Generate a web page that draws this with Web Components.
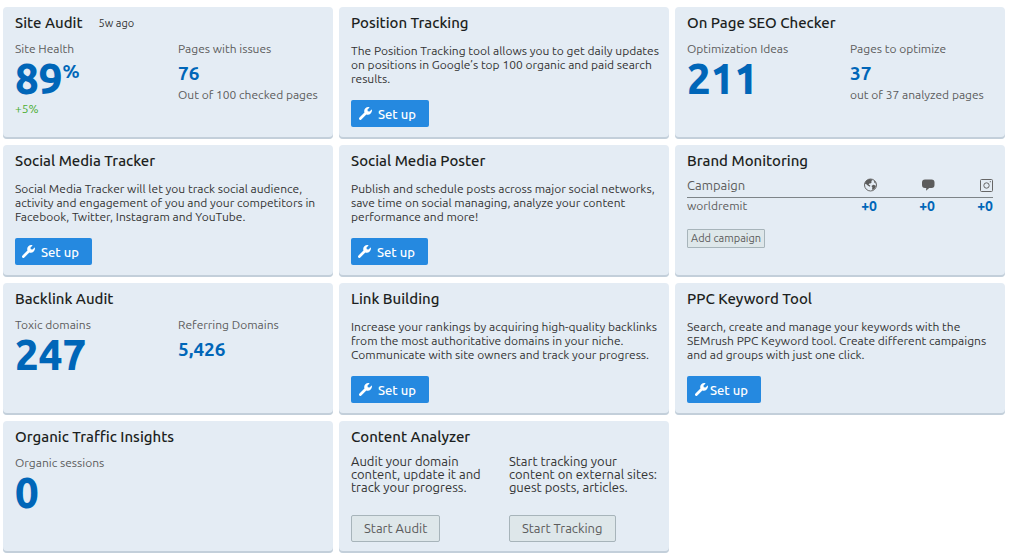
<!DOCTYPE html>
<html lang="en">
<head>
<meta charset="utf-8">
<meta name="viewport" content="width=device-width, initial-scale=1">
<title>SEO tools dashboard</title>
<style>
  body { margin: 0; background: #fff; color: #333; font-family: Ubuntu, "Noto Sans", "Open Sans", sans-serif; }
</style>
</head>
<body>
<tool-dashboard></tool-dashboard>

<script>
const define = (name, html) => {
  const template = document.createElement('template');
  template.innerHTML = html;
  customElements.define(name, class extends HTMLElement {
    constructor() {
      super();
      this.attachShadow({ mode: 'open' }).append(template.content.cloneNode(true));
    }
  });
};

define('tool-card', `
  <style>
    :host { display: block; box-sizing: border-box; min-height: 132px; padding: 6px 12px 8px;
      background: #e4ecf4; border-radius: 4px; box-shadow: inset 0 -2px 0 #c3cfda; }
    header { display: flex; align-items: center; gap: 16px; font-size: 11px; line-height: 20px; }
    h2 { margin: 0; font-size: 15px; font-weight: 500; line-height: 20px; color: #1c1f21; }
  </style>
  <header><h2><slot name="title"></slot></h2><slot name="note"></slot></header>
  <slot></slot>`);

define('metric-pair', `
  <style>
    :host { display: grid; grid-template-columns: 1fr 1fr; gap: 20px; margin-top: 8px; }
  </style>
  <slot></slot>`);

define('metric-large', `
  <style>
    :host { display: block; font-size: 12px; line-height: 16px; color: #5c5c5c; }
    .value { display: flex; align-items: flex-start; font-size: 42px; font-weight: 800; line-height: 44px; color: #0066b8; }
    ::slotted([slot="unit"]) { font-size: 19px; font-weight: 700; line-height: 28px; }
    ::slotted([slot="change"]) { color: #4bae32; }
  </style>
  <div><slot name="label"></slot></div>
  <div class="value"><slot></slot><slot name="unit"></slot></div>
  <div><slot name="change"></slot></div>`);

define('metric-small', `
  <style>
    :host { display: block; font-size: 12px; line-height: 16px; color: #5c5c5c; white-space: nowrap; }
    .value { margin: 4px 0 2px; font-size: 19px; font-weight: 700; line-height: 24px; color: #0066b8; }
  </style>
  <div><slot name="label"></slot></div>
  <div class="value"><slot></slot></div>
  <div><slot name="detail"></slot></div>`);

define('setup-prompt', `
  <style>
    :host { display: block; margin-top: 11px; font-size: 12px; line-height: 14px; white-space: nowrap; }
    p { margin: 0 0 14px; }
    button { display: flex; align-items: center; gap: 6px; height: 27px; padding: 0 13px 0 8px; border: 0;
      border-radius: 2px; background: #2589e0; color: #fff; font: 500 13px/18px Ubuntu, "Noto Sans", "Open Sans", sans-serif; }
    :host([snug]) button { padding: 0 13px 0 7px; }
    :host([tight]) button { gap: 2px; }
    svg { width: 13px; height: 13px; }
  </style>
  <p><slot></slot></p>
  <button type="button">
    <svg viewBox="0 0 512 512" aria-hidden="true"><path fill="#fff" d="M508 109c-2-9-14-12-20-5l-75 75-68-11-11-68 75-75c6-6 4-17-5-20C350-8 294 5 251 48c-46 46-58 114-36 172L19 416c-27 27-25 57-7 77 20 22 51 24 80-5l198-192c58 20 124 9 170-37 42-42 59-97 48-150z"/></svg>
    <span>Set up</span>
  </button>`);

define('outline-button', `
  <style>
    :host { display: block; }
    button { display: block; height: 27px; padding: 0 12px; border: 1px solid #a7b4ba; border-radius: 2px;
      background: #dee7ea; color: #5c5c5c; font: 400 13px/17px Ubuntu, "Noto Sans", "Open Sans", sans-serif; white-space: nowrap; }
    :host([small]) button { height: 19px; padding: 0 3px; font-size: 11px; line-height: 15px; border-radius: 1px; }
  </style>
  <button type="button"><slot></slot></button>`);

define('campaign-table', `
  <style>
    :host { display: block; margin: 6px 0 15px; color: #5c5c5c; }
    table { width: 100%; border-collapse: collapse; table-layout: fixed; font-size: 13px; line-height: 16px; }
    th, td { padding: 0; text-align: right; vertical-align: top; }
    th:first-child, td:first-child { text-align: left; font-weight: 400; }
    th { height: 20px; border-bottom: 1px solid #7d8488; }
    th:not(:first-child) { width: 58px; }
    td { height: 16px; font-size: 12px; }
    td:not(:first-child) { font-size: 14px; font-weight: 700; color: #0066b8; }
    svg { display: block; width: 14px; height: 14px; margin: 1px 0 0 auto; }
  </style>
  <table>
    <thead><tr>
      <th scope="col">Campaign</th>
      <th scope="col" aria-label="Web"><svg viewBox="0 0 14 14"><circle cx="7.5" cy="7" r="6" fill="none" stroke="#666"/><path fill="#5c5c5c" d="M1.7 5.5 3.3 2.6 6.5 1.1l2.6.3.3 1.2-1.4.5.9 1L7.5 5.6l-1.2-.2-.7 1.2 1.7.9-.3 1.2-2-.9L3.7 6.4zM8.5 8l1.8-1.2 2.2.6.3 1.4-1.5 2.3-1.7 1-.6-1.2.4-1.2zM10.7 2.4l1.6 1.4.6 1.6-1.5-.6z"/></svg></th>
      <th scope="col" aria-label="Mentions"><svg viewBox="0 0 14 14"><path fill="#5c5c5c" d="M4 1.5h6.5a3 3 0 0 1 3 3V7a3 3 0 0 1-3 3H8.2L5 12.7 5.3 10H4a3 3 0 0 1-3-3V4.5a3 3 0 0 1 3-3z"/></svg></th>
      <th scope="col" aria-label="Instagram"><svg viewBox="0 0 14 14" fill="none" stroke="#666"><rect x="1.5" y="1.5" width="12" height="12" rx="1"/><circle cx="7.5" cy="7.5" r="2.7"/><circle cx="11.3" cy="3.7" r=".6" fill="#666" stroke="none"/></svg></th>
    </tr></thead>
    <tbody><tr><td>worldremit</td><td>+0</td><td>+0</td><td>+0</td></tr></tbody>
  </table>`);

define('action-pair', `
  <style>
    :host { display: grid; grid-template-columns: 1fr 1fr; gap: 10px; margin-top: 8px; font-size: 13px; line-height: 13px; }
  </style>
  <slot></slot>`);

define('action-block', `
  <style>
    :host { display: block; white-space: nowrap; }
    p { margin: 0 0 21px; }
  </style>
  <p><slot></slot></p>
  <outline-button><slot name="action"></slot></outline-button>`);

define('tool-dashboard', `
  <style>
    :host { display: grid; grid-template-columns: repeat(3, minmax(0, 1fr)); gap: 6px; padding: 7px 5px 7px 3px; }
  </style>
  <tool-card>
    <span slot="title">Site Audit</span><span slot="note">5w ago</span>
    <metric-pair>
      <metric-large><span slot="label">Site Health</span>89<span slot="unit">%</span><span slot="change">+5%</span></metric-large>
      <metric-small><span slot="label">Pages with issues</span>76<span slot="detail">Out of 100 checked pages</span></metric-small>
    </metric-pair>
  </tool-card>
  <tool-card>
    <span slot="title">Position Tracking</span>
    <setup-prompt>The Position Tracking tool allows you to get daily updates<br>on positions in Google’s top 100 organic and paid search<br>results.</setup-prompt>
  </tool-card>
  <tool-card>
    <span slot="title">On Page SEO Checker</span>
    <metric-pair>
      <metric-large><span slot="label">Optimization Ideas</span>211</metric-large>
      <metric-small><span slot="label">Pages to optimize</span>37<span slot="detail">out of 37 analyzed pages</span></metric-small>
    </metric-pair>
  </tool-card>
  <tool-card>
    <span slot="title">Social Media Tracker</span>
    <setup-prompt snug>Social Media Tracker will let you track social audience,<br>activity and engagement of you and your competitors in<br>Facebook, Twitter, Instagram and YouTube.</setup-prompt>
  </tool-card>
  <tool-card>
    <span slot="title">Social Media Poster</span>
    <setup-prompt snug>Publish and schedule posts across major social networks,<br>save time on social managing, analyze your content<br>performance and more!</setup-prompt>
  </tool-card>
  <tool-card>
    <span slot="title">Brand Monitoring</span>
    <campaign-table></campaign-table>
    <outline-button small>Add campaign</outline-button>
  </tool-card>
  <tool-card>
    <span slot="title">Backlink Audit</span>
    <metric-pair>
      <metric-large><span slot="label">Toxic domains</span>247</metric-large>
      <metric-small><span slot="label">Referring Domains</span>5,426</metric-small>
    </metric-pair>
  </tool-card>
  <tool-card>
    <span slot="title">Link Building</span>
    <setup-prompt>Increase your rankings by acquiring high-quality backlinks<br>from the most authoritative domains in your niche.<br>Communicate with site owners and track your progress.</setup-prompt>
  </tool-card>
  <tool-card>
    <span slot="title">PPC Keyword Tool</span>
    <setup-prompt tight>Search, create and manage your keywords with the<br>SEMrush PPC Keyword tool. Create different campaigns<br>and ad groups with just one click.</setup-prompt>
  </tool-card>
  <tool-card>
    <span slot="title">Organic Traffic Insights</span>
    <metric-pair>
      <metric-large><span slot="label">Organic sessions</span>0</metric-large>
    </metric-pair>
  </tool-card>
  <tool-card>
    <span slot="title">Content Analyzer</span>
    <action-pair>
      <action-block>Audit your domain<br>content, update it and<br>track your progress.<span slot="action">Start Audit</span></action-block>
      <action-block>Start tracking your<br>content on external sites:<br>guest posts, articles.<span slot="action">Start Tracking</span></action-block>
    </action-pair>
  </tool-card>`);
</script>
</body>
</html>
